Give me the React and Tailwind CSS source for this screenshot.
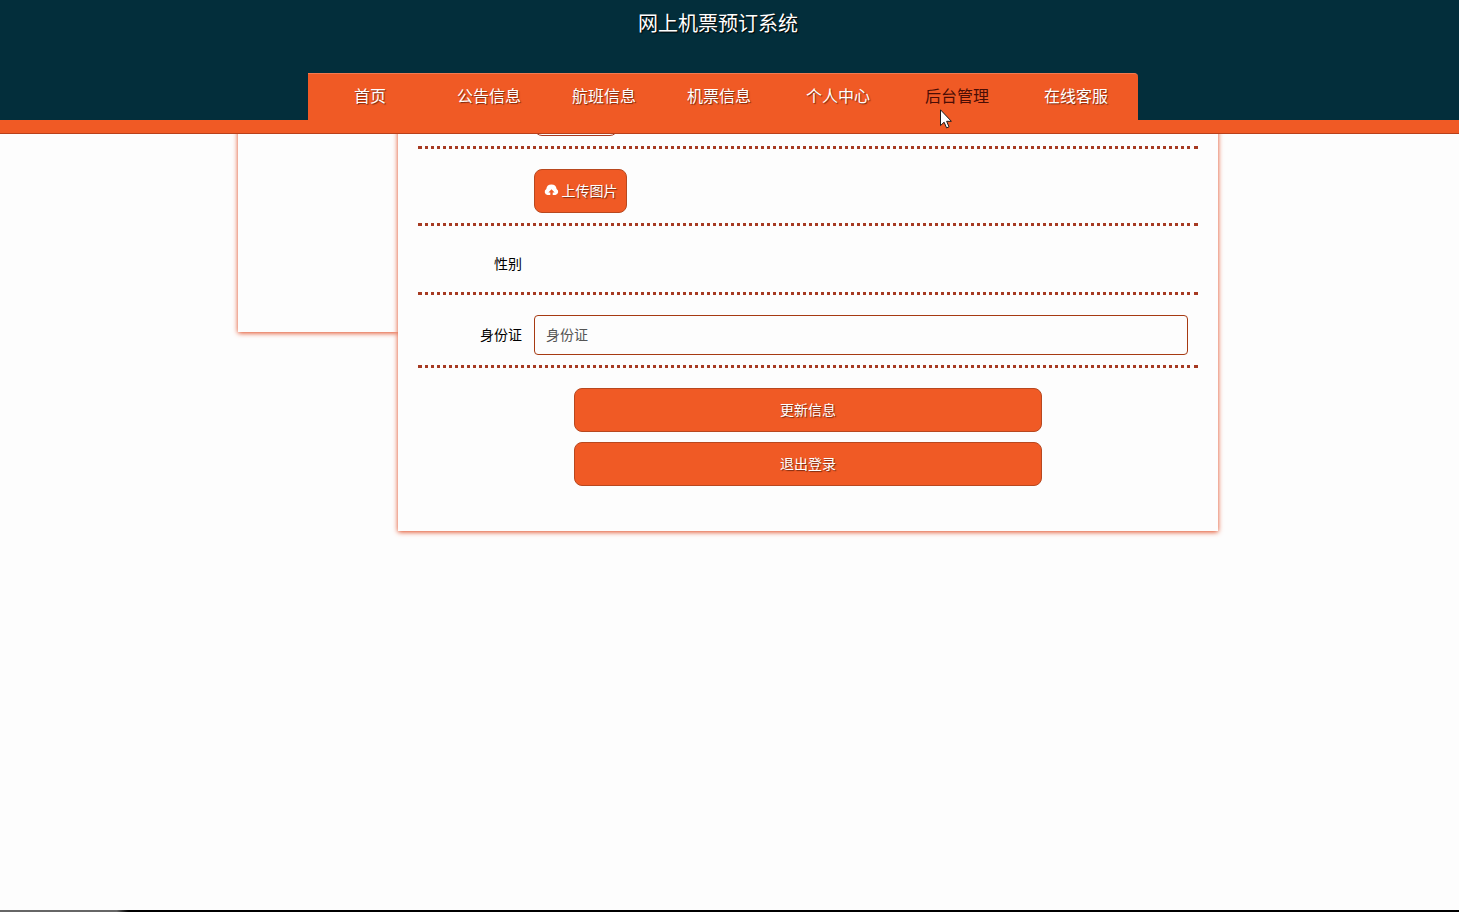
import React, { useState } from 'react';

const navItems = ['首页', '公告信息', '航班信息', '机票信息', '个人中心', '后台管理', '在线客服'];

const Pointer = () => (
  <svg
    className="pointer-events-none absolute left-[40px] top-[35px] z-20 h-5 w-3"
    viewBox="0 0 12 20"
    aria-hidden="true"
  >
    <path
      d="M0.5 0.8 V16.6 L4.1 13.2 L6.6 18.9 L9 17.8 L6.6 12.3 H11.4 Z"
      fill="#fff"
      stroke="#1a1a1a"
      strokeWidth="1"
    />
  </svg>
);

const UploadIcon = () => (
  <svg className="h-3 w-[15px]" viewBox="0 0 15 12" aria-hidden="true">
    <path
      d="M3.6 11 A3.3 3.3 0 0 1 2.3 4.9 A5.2 5.2 0 0 1 12.6 4.9 A3.3 3.3 0 0 1 11.4 11 H8.7 V8.6 H10.6 L7.5 5.2 L4.4 8.6 H6.3 V11 Z"
      fill="currentColor"
    />
  </svg>
);

const Header = ({ active }) => (
  <header className="relative z-10 bg-[#032e3b]">
    <h1 className="pr-[23px] text-center text-[20px] leading-[46px] text-white [text-shadow:1px_1px_1px_#000]">
      网上机票预订系统
    </h1>
    <div className="mt-[27px] pr-[13px]">
      <nav className="mx-auto grid h-[47px] max-w-[830px] grid-cols-[124fr_114fr_116fr_114fr_124fr_114fr_124fr] rounded-tr border-t border-[#f47a50] bg-[#f05a25]">
        {navItems.map((item) => (
          <a
            key={item}
            href="#"
            className={
              item === active
                ? 'relative text-center text-[16px] leading-[43px] text-[#4a0d05]'
                : 'relative text-center text-[16px] leading-[43px] text-white [text-shadow:1px_1px_1px_#7a2a10]'
            }
          >
            {item}
            {item === active && <Pointer />}
          </a>
        ))}
      </nav>
    </div>
    <div className="h-[14px] border-b border-[#b8401a] bg-[#f05a25]" />
  </header>
);

const Row = ({ label, id, children }) => (
  <div className="flex items-center border-b-3 border-dotted border-[#a63a22] pt-5 pr-[10px] pb-[10px]">
    <label htmlFor={id} className="w-[116px] shrink-0 pr-3 pb-[2px] text-right leading-[34px]">
      {label}
    </label>
    <div className="flex-1">{children}</div>
  </div>
);

const buttonStyle =
  'h-11 rounded-lg border border-[#b8481f] bg-[#f05a25] pb-[2px] text-white [text-shadow:1px_1px_1px_#7a2a10]';

const App = () => {
  const [idCard, setIdCard] = useState('');

  return (
    <div className="flex min-h-screen flex-col bg-[#fdfdfd] font-['Noto_Sans_CJK_SC',sans-serif] text-[14px] text-black">
      <Header active="后台管理" />

      <main className="-mt-8 flex-1 pr-[3px]">
        <div className="mx-auto flex max-w-[980px] items-start">
          <aside className="h-[230px] w-40 shrink-0 bg-[#fdfdfd] shadow-[0_1px_5px_#e0441a]" />
          <form
            className="relative flex-1 bg-[#fdfdfd] px-5 pb-[45px] shadow-[0_1px_5px_#e0441a]"
            onSubmit={(e) => e.preventDefault()}
          >
            {/* avatar preview, scrolled under the header */}
            <div className="flex border-b-3 border-dotted border-[#a63a22] pb-[10px] pl-[116px]">
              <div className="h-[34px] w-[84px] rounded-b-lg border border-[#a63a22]" />
            </div>
            <Row>
              <button type="button" className={`${buttonStyle} flex w-[93px] items-center justify-center gap-[3px]`}>
                <UploadIcon />
                上传图片
              </button>
            </Row>
            <Row label="性别" />
            <Row label="身份证" id="idCard">
              <input
                id="idCard"
                type="text"
                placeholder="身份证"
                value={idCard}
                onChange={(e) => setIdCard(e.target.value)}
                className="block h-10 w-full rounded border border-[#a63a12] px-[11px] pb-[2px] placeholder:text-[#555]"
              />
            </Row>
            <div className="mx-auto mt-5 flex w-3/5 flex-col gap-[10px]">
              <button type="submit" className={buttonStyle}>
                更新信息
              </button>
              <button type="button" className={buttonStyle}>
                退出登录
              </button>
            </div>
          </form>
        </div>
      </main>

      <div className="h-[2px] bg-linear-to-r from-[#666] from-8% to-black to-9%" />
    </div>
  );
};

export default App;
